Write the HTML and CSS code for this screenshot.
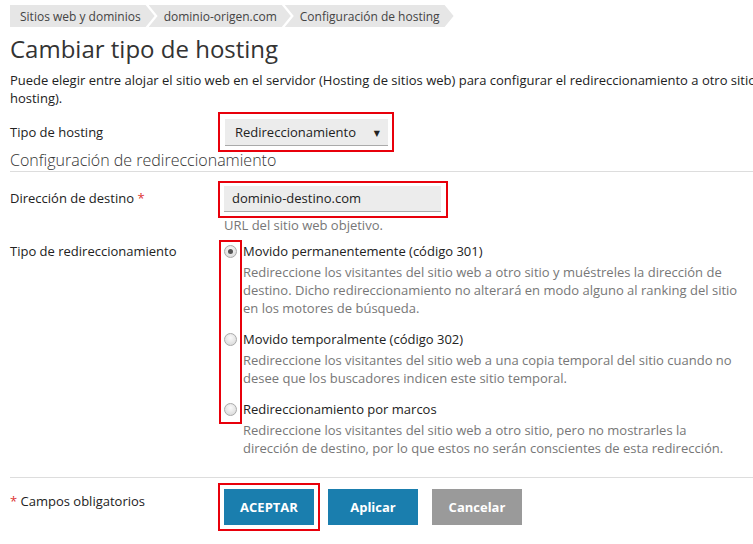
FILE: index.html
```html
<!DOCTYPE html>
<html lang="es">
<head>
<meta charset="utf-8">
<title>Cambiar tipo de hosting</title>
<link rel="stylesheet" href="styles.css">
</head>
<body>
<div class="page">
  <nav class="crumbs">
    <span class="crumb first">Sitios web y dominios</span>
    <span class="crumb">dominio-origen.com</span>
    <span class="crumb">Configuración de hosting</span>
  </nav>
  <h1 class="title">Cambiar tipo de hosting</h1>
  <p class="intro"><span class="line">Puede elegir entre alojar el sitio web en el servidor (Hosting de sitios web) para configurar el redireccionamiento a otro sitio web (Redireccionamiento) o no alojar nada (Sin</span><br>hosting).</p>

  <div class="row row-select">
    <div class="label">Tipo de hosting</div>
    <div class="field">
      <span class="hl hl-select"><span class="select">Redireccionamiento<span class="caret">▼</span></span></span>
    </div>
  </div>

  <h2 class="section">Configuración de redireccionamiento</h2>

  <div class="row row-input">
    <div class="label">Dirección de destino <span class="req">*</span></div>
    <div class="field">
      <span class="hl hl-input"><span class="input">dominio-destino.com</span></span>
      <div class="help">URL del sitio web objetivo.</div>
    </div>
  </div>

  <div class="row row-radios">
    <div class="label">Tipo de redireccionamiento</div>
    <div class="field radios">
      <span class="hl-radios"></span>
      <div class="opt">
        <div class="opt-head"><span class="radio checked"></span>Movido permanentemente (código 301)</div>
        <div class="opt-desc">Redireccione los visitantes del sitio web a otro sitio y muéstreles la dirección de destino. Dicho redireccionamiento no alterará en modo alguno al ranking del sitio en los motores de búsqueda.</div>
      </div>
      <div class="opt">
        <div class="opt-head"><span class="radio"></span>Movido temporalmente (código 302)</div>
        <div class="opt-desc">Redireccione los visitantes del sitio web a una copia temporal del sitio cuando no desee que los buscadores indicen este sitio temporal.</div>
      </div>
      <div class="opt">
        <div class="opt-head"><span class="radio"></span>Redireccionamiento por marcos</div>
        <div class="opt-desc">Redireccione los visitantes del sitio web a otro sitio, pero no mostrarles la dirección de destino, por lo que estos no serán conscientes de esta redirección.</div>
      </div>
    </div>
  </div>

  <div class="footer">
    <div class="label"><span class="req">*</span> Campos obligatorios</div>
    <div class="buttons">
      <span class="hl hl-btn"><button class="btn primary">ACEPTAR</button></span>
      <button class="btn primary">Aplicar</button>
      <button class="btn muted">Cancelar</button>
    </div>
  </div>
</div>
</body>
</html>
```

FILE: styles.css
```css
html, body {
  margin: 0;
  padding: 0;
  background: #fff;
}
body {
  font-family: "Open Sans", "DejaVu Sans", sans-serif;
  font-size: 13px;
  color: #333;
  overflow: hidden;
}
.page {
  padding: 5px 0 0 10px;
  width: 743px;
}
.crumbs {
  display: flex;
  height: 22px;
}
.crumb {
  display: flex;
  align-items: center;
  background: #e6e6e6;
  color: #444;
  font-size: 12px;
  padding: 0 14px 0 15px;
  margin-left: -6px;
  clip-path: polygon(0 0, calc(100% - 9px) 0, 100% 50%, calc(100% - 9px) 100%, 0 100%, 9px 50%);
  white-space: nowrap;
}
.crumb.first {
  margin-left: 0;
  padding-left: 10px;
  clip-path: polygon(0 0, calc(100% - 9px) 0, 100% 50%, calc(100% - 9px) 100%, 0 100%);
}
.title {
  margin: 4px 0 0 0;
  font-size: 24px;
  font-weight: 400;
  line-height: 36px;
  color: #333;
}
.intro {
  margin: 4px 0 0 0;
  line-height: 18px;
  color: #222;
  white-space: nowrap;
  overflow: hidden;
}
.row {
  display: flex;
}
.label {
  width: 208px;
  flex: none;
  color: #222;
}
.field {
  flex: 1;
}
.req {
  color: #d33;
}
.row-select {
  margin-top: 5px;
  align-items: center;
}
.hl {
  display: inline-block;
  border: 2px solid #e8000b;
}
.hl-select {
  padding: 5px 4px 4px 5px;
}
.select {
  display: flex;
  align-items: center;
  justify-content: space-between;
  width: 145px;
  height: 26px;
  padding: 0 8px 0 10px;
  background: #ececec;
  border-bottom: 1px solid #aaa;
  color: #222;
}
.caret {
  font-size: 8px;
}
.section {
  margin: -2px 0 0 0;
  font-size: 16px;
  font-weight: 300;
  line-height: 20px;
  color: #333;
  padding-bottom: 1px;
  border-bottom: 1px solid #ddd;
}
.row-input {
  margin-top: 9px;
}
.row-input .label {
  padding-top: 8px;
}
.hl-input {
  padding: 3px 5px 4px 4px;
}
.input {
  display: block;
  width: 209px;
  height: 25px;
  line-height: 25px;
  padding-left: 8px;
  background: #ececec;
  border-bottom: 1px solid #aaa;
  color: #222;
}
.help {
  margin-top: -2px;
  padding-left: 6px;
  color: #777;
  line-height: 18px;
}
.row-radios {
  margin-top: 8px;
}
.radios {
  position: relative;
}
.hl-radios {
  position: absolute;
  left: 1px;
  top: -2px;
  width: 19px;
  height: 180px;
  border: 2px solid #e8000b;
}
.opt + .opt {
  margin-top: 13px;
}
.opt-head {
  display: flex;
  align-items: center;
  line-height: 18px;
  color: #222;
}
.radio {
  width: 11px;
  height: 11px;
  border-radius: 50%;
  border: 1px solid #aaa;
  background: radial-gradient(circle at 50% 35%, #fafafa, #d4d4d4);
  margin: 0 6px 0 6px;
  position: relative;
  flex: none;
}
.radio.checked::after {
  content: "";
  position: absolute;
  left: 3px;
  top: 3px;
  width: 5px;
  height: 5px;
  border-radius: 50%;
  background: #555;
}
.opt-desc {
  margin-top: 3px;
  padding-left: 25px;
  line-height: 18px;
  color: #777;
  width: 498px;
}
.footer {
  display: flex;
  margin-top: 20px;
  border-top: 1px solid #ddd;
  padding-top: 5px;
}
.footer .label {
  padding-top: 9px;
}
.buttons {
  display: flex;
  align-items: center;
  gap: 13px;
}
.hl-btn {
  padding: 4px;
  margin-right: -5px;
}
.btn {
  border: 0;
  font-family: "Open Sans", "DejaVu Sans", sans-serif;
  font-size: 13px;
  font-weight: 700;
  color: #fff;
  width: 90px;
  height: 36px;
  padding: 0;
}
.btn.primary {
  background: #1a7eae;
}
.btn.muted {
  background: #9a9a9a;
  margin-left: 1px;
}
```
